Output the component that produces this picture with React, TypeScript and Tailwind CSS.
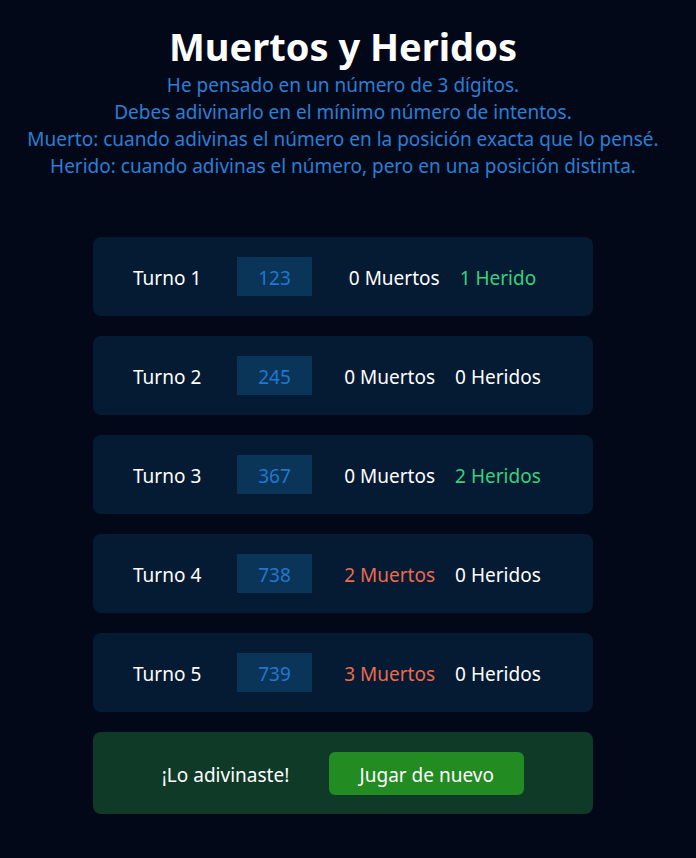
const turns = [
  { n: 1, guess: '123', muertos: 0, heridos: 1 },
  { n: 2, guess: '245', muertos: 0, heridos: 0 },
  { n: 3, guess: '367', muertos: 0, heridos: 2 },
  { n: 4, guess: '738', muertos: 2, heridos: 0 },
  { n: 5, guess: '739', muertos: 3, heridos: 0 },
];

function TurnRow({ n, guess, muertos, heridos }: (typeof turns)[number]) {
  return (
    <div className="grid h-[79px] grid-cols-[84px_75px_1fr] items-center gap-5 rounded-lg bg-[#051a33] px-10">
      <span className="pt-1 text-white">Turno {n}</span>
      <div className="flex h-[39px] items-center justify-center bg-[#0b3459] pt-1 text-[#1f78d0]">{guess}</div>
      <div className="flex justify-center gap-5 pt-1">
        <span className={muertos > 0 ? 'text-[#ec6a4e]' : 'text-white'}>
          {muertos} {muertos === 1 ? 'Muerto' : 'Muertos'}
        </span>
        <span className={heridos > 0 ? 'text-[#38d27d]' : 'text-white'}>
          {heridos} {heridos === 1 ? 'Herido' : 'Heridos'}
        </span>
      </div>
    </div>
  );
}

export default function App() {
  return (
    <div className="min-h-screen bg-[#020817] text-[19px] font-['Noto_Sans',sans-serif]">
      <div className="w-[686px] pt-[26px]">
        {/* Header */}
        <div className="text-center">
          <h1 className="text-[38px] leading-10 font-bold text-white">Muertos y Heridos</h1>
          <div className="mt-[6px] leading-[27px] text-[#2a7fd6]">
            <p>He pensado en un número de 3 dígitos.</p>
            <p>Debes adivinarlo en el mínimo número de intentos.</p>
            <p>Muerto: cuando adivinas el número en la posición exacta que lo pensé.</p>
            <p>Herido: cuando adivinas el número, pero en una posición distinta.</p>
          </div>
        </div>

        {/* Turns */}
        <div className="mx-auto mt-[57px] flex w-[500px] flex-col gap-5">
          {turns.map((t) => (
            <TurnRow key={t.n} {...t} />
          ))}
          <div className="flex h-[82px] items-center justify-center gap-10 rounded-lg bg-[#0e3a27]">
            <span className="pt-1 text-white">¡Lo adivinaste!</span>
            <button className="h-[43px] w-[195px] rounded-md bg-[#228b22] pt-1 text-white">Jugar de nuevo</button>
          </div>
        </div>
      </div>
    </div>
  );
}
